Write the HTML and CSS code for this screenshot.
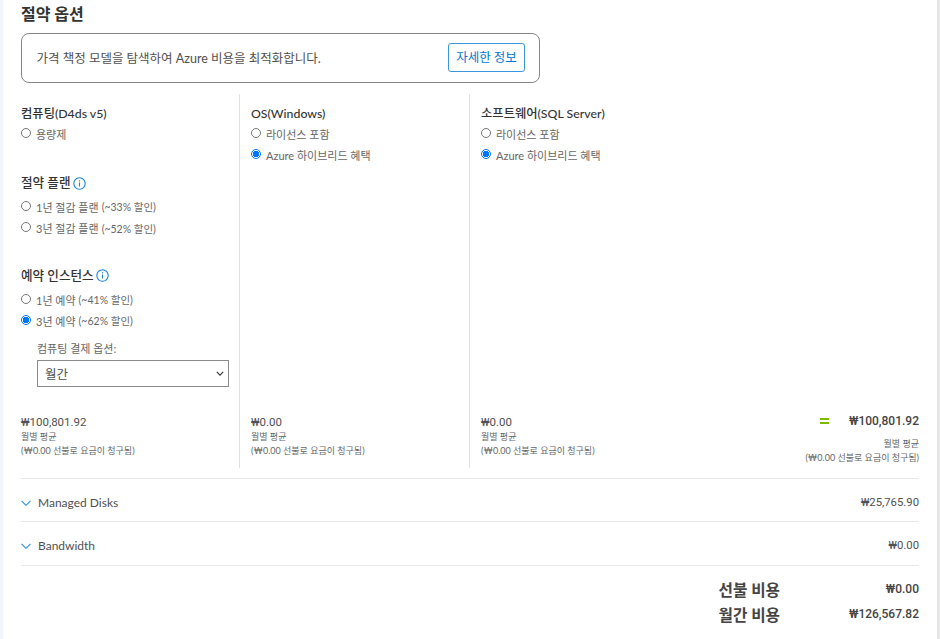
FILE: index.html
```html
<!DOCTYPE html>
<html lang="ko">
<head>
<meta charset="utf-8">
<title>절약 옵션</title>
<link rel="stylesheet" href="styles.css">
</head>
<body>
<main class="page">
  <h2 class="title">절약 옵션</h2>
  <div class="banner">
    <span>가격 책정 모델을 탐색하여 Azure 비용을 최적화합니다.</span>
    <a class="more" href="#">자세한 정보</a>
  </div>
  <div class="columns">
    <section class="col col-first">
      <div class="col-body">
        <h3 class="head">컴퓨팅(D4ds v5)</h3>
        <label class="opt"><span class="radio"></span>용량제</label>
        <h3 class="head head-plan">절약 플랜 <svg class="info" viewBox="0 0 13 13"><circle cx="6.5" cy="6.5" r="5.7"/><path d="M6.5 5.6v4M6.5 3.2v1.2"/></svg></h3>
        <label class="opt opt-first"><span class="radio"></span>1년 절감 플랜 <small>(~33% 할인)</small></label>
        <label class="opt"><span class="radio"></span>3년 절감 플랜 <small>(~52% 할인)</small></label>
        <h3 class="head head-res">예약 인스턴스 <svg class="info" viewBox="0 0 13 13"><circle cx="6.5" cy="6.5" r="5.7"/><path d="M6.5 5.6v4M6.5 3.2v1.2"/></svg></h3>
        <label class="opt opt-first"><span class="radio"></span>1년 예약 <small>(~41% 할인)</small></label>
        <label class="opt"><span class="radio on"></span>3년 예약 <small>(~62% 할인)</small></label>
        <div class="payment">
          <div class="pay-label">컴퓨팅 결제 옵션:</div>
          <div class="select">월간<svg viewBox="0 0 10 6"><path d="M1 1l4 4 4-4"/></svg></div>
        </div>
      </div>
      <div class="foot">
        <div class="price">₩100,801.92</div>
        <div class="note">월별 평균</div>
        <div class="note">(₩0.00 선불로 요금이 청구됨)</div>
      </div>
    </section>
    <section class="col">
      <div class="col-body">
        <h3 class="head">OS(Windows)</h3>
        <label class="opt"><span class="radio"></span>라이선스 포함</label>
        <label class="opt"><span class="radio on"></span>Azure 하이브리드 혜택</label>
      </div>
      <div class="foot">
        <div class="price">₩0.00</div>
        <div class="note">월별 평균</div>
        <div class="note">(₩0.00 선불로 요금이 청구됨)</div>
      </div>
    </section>
    <section class="col col-last">
      <div class="col-body">
        <h3 class="head">소프트웨어(SQL Server)</h3>
        <label class="opt"><span class="radio"></span>라이선스 포함</label>
        <label class="opt"><span class="radio on"></span>Azure 하이브리드 혜택</label>
      </div>
      <div class="foot">
        <div class="price">₩0.00</div>
        <div class="note">월별 평균</div>
        <div class="note">(₩0.00 선불로 요금이 청구됨)</div>
      </div>
    </section>
    <section class="result">
      <div class="result-line"><span class="equals"></span><span class="result-price">₩100,801.92</span></div>
      <div class="note note-r1">월별 평균</div>
      <div class="note note-r2">(₩0.00 선불로 요금이 청구됨)</div>
    </section>
  </div>
  <div class="row row-first">
    <span class="row-name"><svg class="chev" viewBox="0 0 10 6"><path d="M.5.8l4.5 4.5L9.500.8"/></svg>Managed Disks</span>
    <span class="row-val">₩25,765.90</span>
  </div>
  <div class="row">
    <span class="row-name"><svg class="chev" viewBox="0 0 10 6"><path d="M.5.8l4.5 4.5L9.500.8"/></svg>Bandwidth</span>
    <span class="row-val">₩0.00</span>
  </div>
  <div class="totals">
    <div class="total"><span class="total-name">선불 비용</span><span class="total-val">₩0.00</span></div>
    <div class="total"><span class="total-name">월간 비용</span><span class="total-val">₩126,567.82</span></div>
  </div>
</main>
</body>
</html>
```
FILE: styles.css
```css
* { box-sizing: border-box; }
html, body { margin: 0; height: 100%; }
body {
  background: #fff;
  font-family: Lato, "Noto Sans CJK KR", sans-serif;
  color: #505050;
  overflow: hidden;
}
.page {
  width: 934px;
  height: 639px;
  padding: 0 18px;
  margin-left: 3px;
  background: #fff;
  box-shadow: -3px 0 0 #f2f5f9, 3px 0 0 #e6e6e6;
  overflow: hidden;
}
.title {
  margin: 3px 0 0;
  font-size: 16px;
  line-height: 22px;
  font-weight: 700;
  color: #333;
}
.banner {
  display: flex;
  align-items: center;
  justify-content: space-between;
  width: 519px;
  height: 50px;
  margin-top: 8px;
  padding: 0 14px 2px 14.500px;
  border: 1.500px solid #858585;
  border-radius: 8px;
  font-size: 12.500px;
}
.more {
  display: block;
  width: 77px;
  height: 29px;
  line-height: 27px;
  text-align: center;
  border: 1px solid #3a96dd;
  border-radius: 3px;
  color: #0078d4;
  text-decoration: none;
  font-size: 12.500px;
}
.columns {
  display: flex;
  height: 374px;
  margin-top: 11px;
}
.col {
  display: flex;
  flex-direction: column;
  justify-content: space-between;
  width: 230px;
  padding: 0 0 0 11px;
  border-right: 1px solid #e1e1e1;
}
.col-first { width: 219px; padding-left: 0; }
.col-last { border-right: 0; width: 330px; }
.head {
  margin: 0;
  padding-top: 11px;
  font-size: 12.300px;
  line-height: 18px;
  font-weight: 500;
  color: #333;
}
.head-plan { padding-top: 30px; display: flex; align-items: center; gap: 2px; font-size: 12.600px; }
.head-res { padding-top: 28px; display: flex; align-items: center; gap: 2px; font-size: 12.600px; }
.info {
  width: 13px;
  height: 13px;
  fill: none;
  stroke: #1a84d6;
  stroke-width: 1.100;
}
.opt {
  display: flex;
  align-items: center;
  height: 21.300px;
  font-size: 11px;
  color: #666;
}
.opt-first { margin-top: 4px; }
.opt small { font-size: 10.500px; margin-left: 3px; }
.radio {
  width: 10px;
  height: 10px;
  margin-right: 5px;
  border: 1px solid #767676;
  border-radius: 50%;
  flex: none;
  position: relative;
  top: -1px;
}
.radio.on {
  border-color: #0075ff;
  background: radial-gradient(circle, #0075ff 0 3px, #fff 3.500px);
}
.payment { padding: 10px 0 0 16px; }
.pay-label { font-size: 11px; line-height: 16px; color: #666; }
.select {
  display: flex;
  align-items: center;
  justify-content: space-between;
  width: 192px;
  height: 27px;
  margin-top: 3px;
  padding: 0 4px 0 7px;
  border: 1px solid #8a8a8a;
  font-size: 12.500px;
}
.select svg {
  width: 8px;
  height: 5px;
  fill: none;
  stroke: #333;
  stroke-width: 1.400;
}
.foot { padding-bottom: 10px; }
.price {
  font-family: Roboto, "Noto Sans CJK KR", sans-serif;
  font-size: 11.500px;
  line-height: 16px;
  color: #505050;
}
.note { font-size: 9px; line-height: 14px; color: #666; }
.result {
  flex: 1;
  text-align: right;
  margin-left: -130px;
  align-self: flex-end;
  padding-bottom: 3px;
}
.result-line { display: flex; justify-content: flex-end; align-items: center; position: relative; top: 1px; }
.equals {
  width: 9px;
  height: 6px;
  margin-right: 20px;
  border-top: 2px solid #7fba00;
  border-bottom: 2px solid #7fba00;
}
.result-price {
  font-family: Roboto, "Noto Sans CJK KR", sans-serif;
  font-size: 12px;
  line-height: 16px;
  font-weight: 500;
  color: #444;
}
.note-r1 { margin-top: 9px; }
.row {
  display: flex;
  justify-content: space-between;
  align-items: center;
  height: 43.500px;
  padding-top: 5px;
  border-bottom: 1px solid #e8e8e8;
  font-size: 12px;
}
.row-first { border-top: 1px solid #e8e8e8; height: 44px; margin-top: 10px; }
.row-name { display: flex; align-items: center; }
.row-val { font-family: Roboto, "Noto Sans CJK KR", sans-serif; font-size: 11.300px; }
.chev {
  width: 10px;
  height: 6px;
  margin-right: 7px;
  fill: none;
  stroke: #2b8fdc;
  stroke-width: 1.100;
}
.totals { padding-top: 11px; }
.total {
  display: flex;
  justify-content: flex-end;
  align-items: center;
  height: 25px;
}
.total-name {
  font-size: 15.700px;
  font-weight: 700;
  color: #444;
}
.total-val {
  width: 139px;
  text-align: right;
  font-family: Roboto, "Noto Sans CJK KR", sans-serif;
  font-size: 12px;
  font-weight: 500;
  color: #444;
}
```
